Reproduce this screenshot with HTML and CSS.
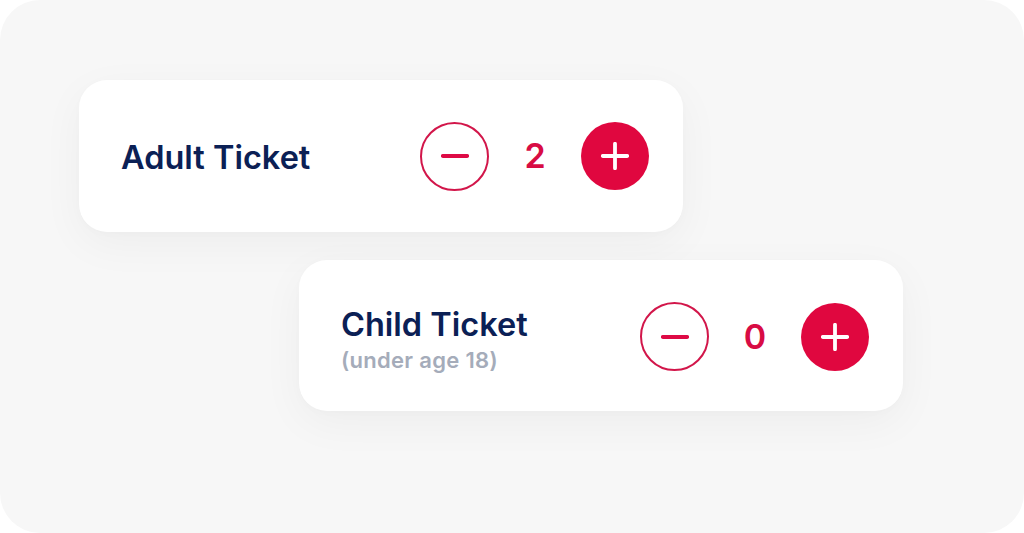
FILE: index.html
```html
<!DOCTYPE html>
<html lang="en">
<head>
<meta charset="utf-8">
<link rel="stylesheet" href="styles.css">
</head>
<body>
<div class="panel">
  <div class="card card-adult">
    <div class="label">
      <div class="title">Adult Ticket</div>
    </div>
    <div class="stepper">
      <button class="btn btn-minus" aria-label="Decrease">
        <svg width="28" height="28" viewBox="0 0 28 28"><path d="M1.8 14h24.4" stroke="#de0a45" stroke-width="3.8" stroke-linecap="round"/></svg>
      </button>
      <span class="count">2</span>
      <button class="btn btn-plus" aria-label="Increase">
        <svg width="28" height="28" viewBox="0 0 28 28"><path d="M1.8 14h24.4M14 1.8v24.4" stroke="#fff" stroke-width="3.8" stroke-linecap="round"/></svg>
      </button>
    </div>
  </div>
  <div class="card card-child">
    <div class="label">
      <div class="title">Child Ticket</div>
      <div class="sub">(under age 18)</div>
    </div>
    <div class="stepper">
      <button class="btn btn-minus" aria-label="Decrease">
        <svg width="28" height="28" viewBox="0 0 28 28"><path d="M1.8 14h24.4" stroke="#de0a45" stroke-width="3.8" stroke-linecap="round"/></svg>
      </button>
      <span class="count">0</span>
      <button class="btn btn-plus" aria-label="Increase">
        <svg width="28" height="28" viewBox="0 0 28 28"><path d="M1.8 14h24.4M14 1.8v24.4" stroke="#fff" stroke-width="3.8" stroke-linecap="round"/></svg>
      </button>
    </div>
  </div>
</div>
</body>
</html>
```
FILE: styles.css
```css
* { box-sizing: border-box; }
html, body {
  margin: 0;
  padding: 0;
  background: #ffffff;
}
body {
  font-family: Inter, "Noto Sans", sans-serif;
  width: 1024px;
  height: 533px;
  overflow: hidden;
}
.panel {
  width: 1024px;
  height: 533px;
  background: #f7f7f7;
  border-radius: 40px;
  padding-top: 80px;
  display: flex;
  flex-direction: column;
  gap: 28px;
}
.card {
  width: 604px;
  height: 152px;
  background: #ffffff;
  border-radius: 28px;
  box-shadow: 0 12px 44px rgba(0, 0, 0, 0.045), 0 2px 8px rgba(0, 0, 0, 0.015);
  display: flex;
  align-items: center;
  justify-content: space-between;
  padding: 0 34px 0 42px;
}
.card-adult { margin-left: 79px; }
.card-child { margin-left: 299px; height: 151px; padding-top: 2px; }
.label {
  display: flex;
  flex-direction: column;
  padding-top: 4px;
}
.card-child .label { padding-top: 6px; }
.title {
  font-size: 32.5px;
  font-weight: 600;
  color: #0b2055;
  line-height: 38px;
}
.sub {
  font-size: 22px;
  font-weight: 600;
  color: #a5acba;
  letter-spacing: 0.3px;
  line-height: 28px;
  margin-top: 2px;
}
.stepper {
  display: flex;
  align-items: center;
  gap: 24px;
}
.btn {
  width: 69px;
  height: 69px;
  border-radius: 50%;
  padding: 0;
  margin: 0;
  display: flex;
  align-items: center;
  justify-content: center;
  cursor: pointer;
}
.btn svg { display: block; }
.btn-minus {
  background: #ffffff;
  border: 2px solid #d2164a;
}
.btn-plus {
  width: 68px;
  height: 68px;
  background: #e0073f;
  border: none;
}
.count {
  width: 44px;
  text-align: center;
  font-size: 34px;
  font-weight: 600;
  color: #d80c44;
  line-height: 40px;
}
```
